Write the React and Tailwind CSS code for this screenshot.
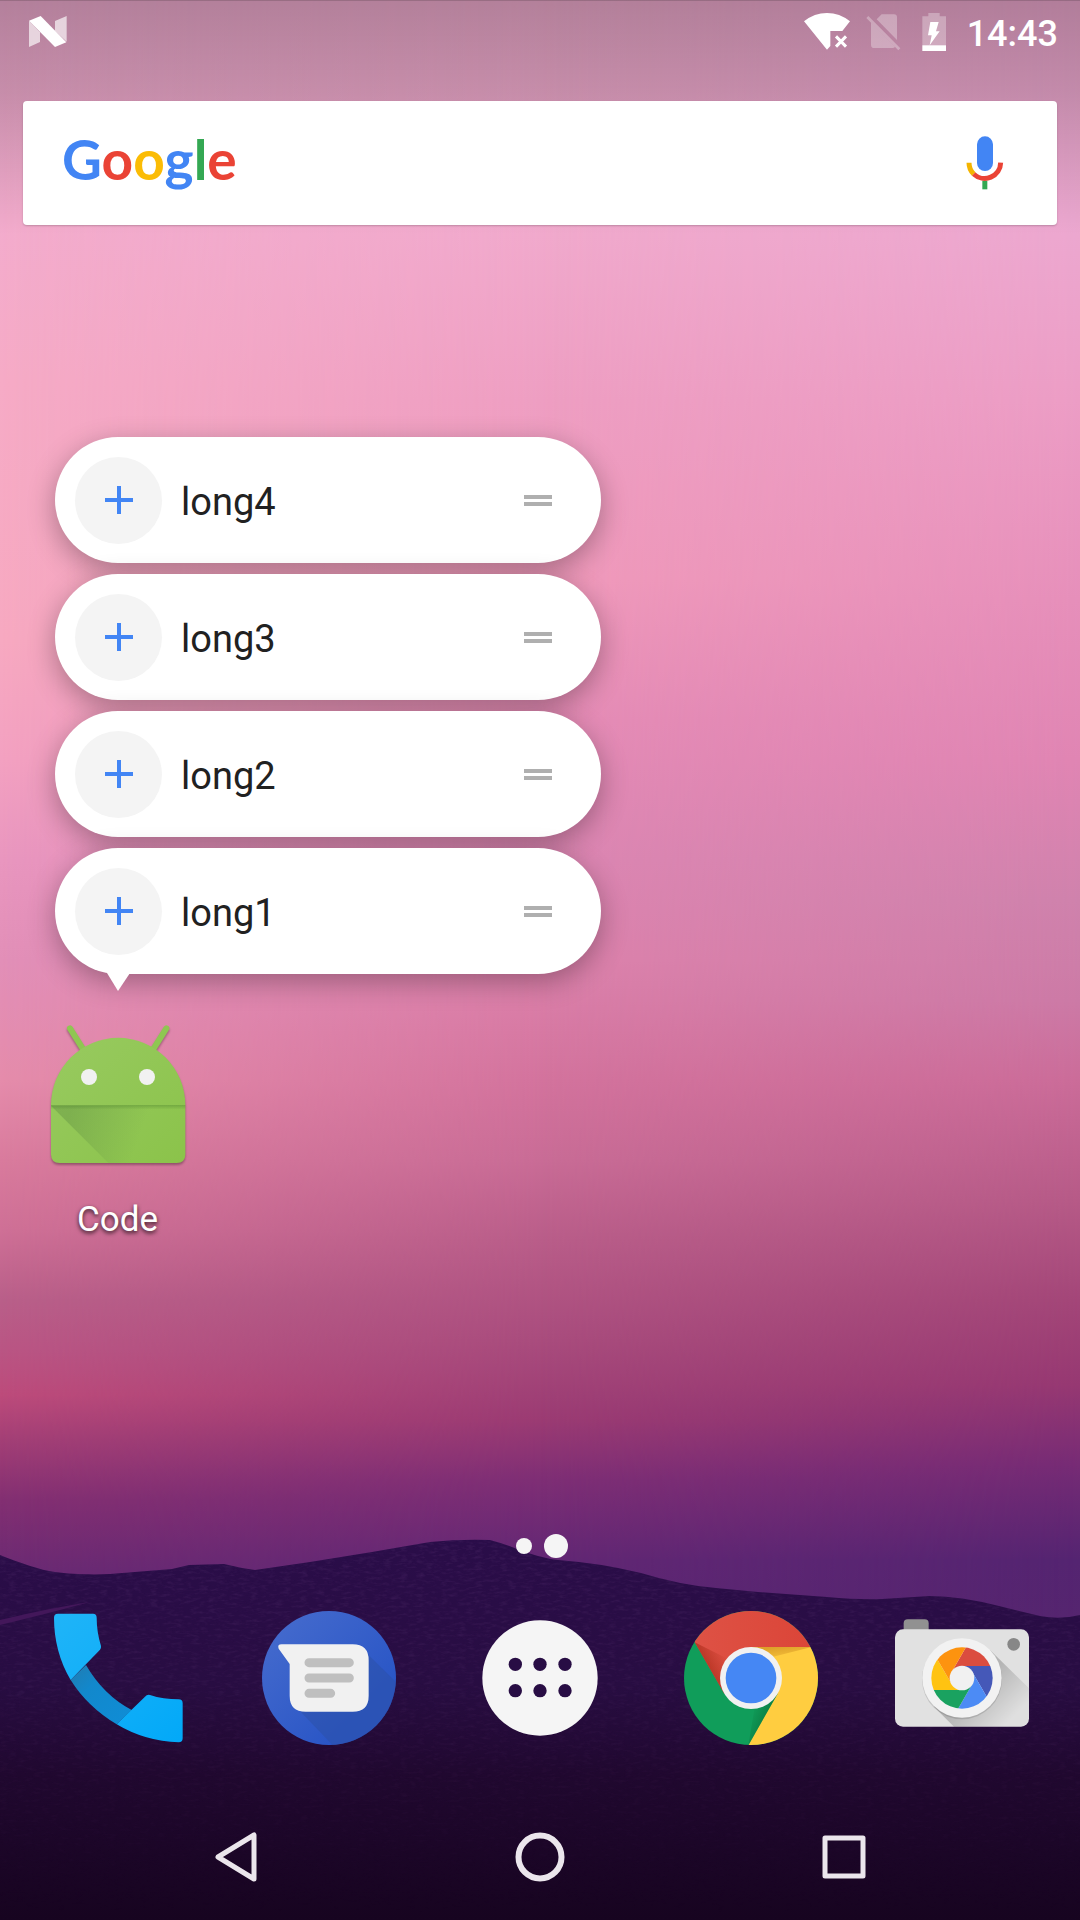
const SHORTCUTS = ["long4", "long3", "long2", "long1"];

/* Column colours of the dusk sky, top to bottom: [y, colour] */
const SKY_LEFT = [
  [0, "#f2add2"], [220, "#f3accd"], [380, "#f6abc6"], [640, "#f7a9c1"], [760, "#f3a1c1"], [860, "#e996bf"],
  [960, "#e28fb8"], [1080, "#e58cab"], [1160, "#d97b9d"], [1230, "#cf7096"], [1300, "#b95f89"],
  [1350, "#ba5584"], [1395, "#bd4b7b"], [1440, "#a33f76"], [1500, "#832f72"], [1570, "#6b2a73"], [1620, "#6b2a73"],
];
const SKY_MID = [
  [0, "#f2add0"], [220, "#f1aacd"], [400, "#ee9ec2"], [580, "#f09abb"], [720, "#e58cb6"], [860, "#dc86b2"],
  [960, "#dd82ac"], [1080, "#d3739d"], [1160, "#c96c96"], [1240, "#b95d89"], [1340, "#a94c7d"],
  [1420, "#9b3b73"], [1480, "#7e2e75"], [1560, "#622774"], [1620, "#5a2672"],
];
const SKY_RIGHT = [
  [0, "#efa9d0"], [220, "#eca8d0"], [400, "#ec9dc5"], [600, "#e68fba"], [760, "#e085b3"], [900, "#cf82ac"],
  [1000, "#cc7aa6"], [1080, "#cb6c99"], [1200, "#b65a87"], [1300, "#a34678"], [1385, "#963872"],
  [1465, "#762b75"], [1560, "#542471"], [1620, "#55256f"],
];

function Stops({ list }) {
  return list.map(([y, c]) => <stop key={y} offset={y / 1620} stopColor={c} />);
}

function Wallpaper() {
  const ridge =
    "M0 1555 C20 1563 40 1570 55 1572 S90 1575 110 1574 L172 1569 L189 1565 L224 1564 Q240 1568 255 1570 L310 1562 L372 1552 L430 1542 Q460 1539 490 1540 Q505 1544 517 1549 Q540 1558 558 1560 Q600 1563 641 1573 Q680 1585 716 1588 L758 1592 L827 1597 Q860 1600 882 1599 L930 1596 Q960 1596 999 1606 L1040 1616 Q1060 1620 1080 1615 V1920 H0Z";
  return (
    <svg className="absolute inset-0 -z-10 size-full" viewBox="0 0 1080 1920" preserveAspectRatio="none" aria-hidden="true">
      <defs>
        <linearGradient id="skyL" x1="0" y1="0" x2="0" y2="1"><Stops list={SKY_LEFT} /></linearGradient>
        <linearGradient id="skyM" x1="0" y1="0" x2="0" y2="1"><Stops list={SKY_MID} /></linearGradient>
        <linearGradient id="skyR" x1="0" y1="0" x2="0" y2="1"><Stops list={SKY_RIGHT} /></linearGradient>
        <linearGradient id="fadeM">
          <stop offset="0" stopColor="#fff" stopOpacity="0" /><stop offset=".5" stopColor="#fff" />
        </linearGradient>
        <linearGradient id="fadeR">
          <stop offset=".5" stopColor="#fff" stopOpacity="0" /><stop offset="1" stopColor="#fff" />
        </linearGradient>
        <mask id="maskM"><rect width="1080" height="1620" fill="url(#fadeM)" /></mask>
        <mask id="maskR"><rect width="1080" height="1620" fill="url(#fadeR)" /></mask>
        <linearGradient id="hill" x1="0" y1="0" x2="0" y2="1">
          <stop offset="0" stopColor="#2a0d49" /><stop offset=".38" stopColor="#280d42" />
          <stop offset=".62" stopColor="#20082f" /><stop offset="1" stopColor="#170420" />
        </linearGradient>
        <linearGradient id="scrim" x1="0" y1="0" x2="0" y2="1">
          <stop offset="0" stopColor="#000" stopOpacity=".26" />
          <stop offset=".4" stopColor="#000" stopOpacity=".18" />
          <stop offset="1" stopColor="#000" stopOpacity="0" />
        </linearGradient>
        <linearGradient id="grainFade" x1="0" y1="0" x2="0" y2="1">
          <stop offset="0" stopColor="#fff" /><stop offset="1" stopColor="#000" />
        </linearGradient>
        <mask id="grainMask"><path d={ridge} fill="url(#grainFade)" /></mask>
        <filter id="grain" x="0" y="0" width="100%" height="100%">
          <feTurbulence type="fractalNoise" baseFrequency=".12 .35" numOctaves="3" seed="4" />
          <feColorMatrix values="0 0 0 0 .42  0 0 0 0 .16  0 0 0 0 .5  1.6 0 0 0 -.7" />
        </filter>
      </defs>
      <rect width="1080" height="1620" fill="url(#skyL)" />
      <rect width="1080" height="1620" fill="url(#skyM)" mask="url(#maskM)" />
      <rect width="1080" height="1620" fill="url(#skyR)" mask="url(#maskR)" />
      <rect width="1080" height="235" fill="url(#scrim)" />
      <rect width="1080" height="1" fill="#000" opacity=".15" />
      <path d={ridge} fill="url(#hill)" />
      <g mask="url(#grainMask)"><rect y="1535" width="1080" height="385" filter="url(#grain)" opacity=".16" /></g>
      <path d="M0 1620 Q50 1608 90 1602 Q50 1613 0 1625Z" fill="#43175a" />
    </svg>
  );
}

function StatusBar() {
  return (
    <header className="flex h-[63px] items-center gap-4 pr-[22px] pl-7">
      <svg className="h-[33px] w-10" viewBox="84 45 120 99" fill="#fff" role="img" aria-label="Android N">
        <path d="M87 62 L120 97 V126 L87 141Z M165 63 L200 48 V125 L165 93Z" opacity=".65" />
        <path d="M87 62 L122 48 L199 127 L165 141Z" />
      </svg>
      <svg className="ml-auto h-[37px] w-[46px]" viewBox="186 39 138 111" fill="#fff" role="img" aria-label="Wi-Fi, no internet">
        <path d="M186 64 Q217 39 255 39 T324 64 L301 93 H265 V138 L255 149Z" />
        <path d="M282 109 L312 140 M312 109 L282 140" stroke="#fff" strokeWidth="9" />
      </svg>
      <svg className="h-[38px] w-10" viewBox="372 39 120 114" fill="#fff" opacity=".3" role="img" aria-label="No SIM">
        <path d="M404 58 L419 43 H456 Q465 43 465 52 V120Z M387 68 L459 141 Q456 144 452 144 H397 Q387 144 387 134Z M379 48 L475 145 L469 151 L373 54Z" />
      </svg>
      <svg className="h-[38px] w-[29px]" viewBox="546 36 87 114" fill="#fff" role="img" aria-label="Battery charging">
        <path d="M547 46 H565 V36 H599 V46 H618 V133 H547Z" opacity=".3" />
        <path d="M547 133 H618 V150 H547Z M571 63 H596 L588 91 H599 L569 133 L575 103 H564Z" />
      </svg>
      <time className="pt-1 text-[36px] leading-10 font-medium text-white">14:43</time>
    </header>
  );
}

function SearchBar() {
  return (
    <div className="mx-[23px] mt-[38px] flex h-[124px] items-center justify-between rounded bg-white pr-[53px] pl-[39px] shadow-[0_1px_2px_rgba(0,0,0,0.2)]">
      <button type="button" aria-label="Google" className="pb-2 font-[Lato,'Liberation_Sans',sans-serif] text-[55px] leading-[68px] font-bold">
        <span className="text-[#4285f4]">G</span>
        <span className="text-[#ea4335]">o</span>
        <span className="text-[#fbbc05]">o</span>
        <span className="text-[#4285f4]">g</span>
        <span className="text-[#34a853]">l</span>
        <span className="text-[#ea4335]">e</span>
      </button>
      <button type="button" aria-label="Voice search">
        <svg className="h-[54px] w-[38px]" viewBox="677 410 114 162" fill="none">
          <rect x="710" y="411" width="48" height="104" rx="24" fill="#4285f4" />
          <path d="M726 544 H741 V570 H726Z" fill="#34a853" />
          <path d="M686 490 A48 48 0 0 0 700 524" stroke="#f4b400" strokeWidth="15" />
          <path d="M700 524 A48 48 0 0 0 781 490" stroke="#ea4335" strokeWidth="15" />
        </svg>
      </button>
    </div>
  );
}

function Shortcut({ label, last }) {
  return (
    <li className="relative">
      <button type="button" className="flex h-[126px] w-full items-center rounded-full bg-white pr-[49px] pl-5 text-left shadow-[0_8px_28px_rgba(0,0,0,0.3)]">
        <span className="grid size-[87px] place-items-center rounded-full bg-[#f4f4f4]">
          <svg className="size-7" viewBox="0 0 28 28" stroke="#4285f4" strokeWidth="4" aria-hidden="true">
            <path d="M14 0V28M0 14H28" />
          </svg>
        </span>
        <span className="ml-[19px] flex-1 pt-1 text-[38px] leading-[44px] text-[#212121]">{label}</span>
        <svg className="h-3 w-7" viewBox="0 0 28 12" fill="#afafaf" aria-hidden="true">
          <path d="M0 1H28V5H0Z M0 8H28V12H0Z" />
        </svg>
      </button>
      {last && (
        <svg className="absolute top-full left-[51px] -mt-1 h-[21px] w-6" viewBox="0 0 24 21" fill="#fff" aria-hidden="true">
          <path d="M1 3 H24 L12 21Z" />
        </svg>
      )}
    </li>
  );
}

function AndroidIcon() {
  return (
    <svg className="h-36 w-[134px] overflow-visible drop-shadow-[0_2px_1px_rgba(0,0,0,0.3)]" viewBox="63 552 402 432" aria-hidden="true">
      <defs>
        <linearGradient id="droid" x1="0" y1="0" x2="1" y2="1">
          <stop offset="0" stopColor="#98ca60" /><stop offset="1" stopColor="#8bc34a" />
        </linearGradient>
        <linearGradient id="fold" gradientUnits="userSpaceOnUse" x1="120" y1="820" x2="330" y2="890">
          <stop offset="0" stopColor="#4d7a3a" stopOpacity=".3" /><stop offset="1" stopColor="#4d7a3a" stopOpacity="0" />
        </linearGradient>
        <linearGradient id="crease" x1="0" y1="0" x2="0" y2="1">
          <stop offset="0" stopColor="#33691e" stopOpacity=".3" /><stop offset="1" stopColor="#33691e" stopOpacity="0" />
        </linearGradient>
      </defs>
      <path d="M120 565 L162 632 M409 565 L367 632" stroke="#8fc652" strokeWidth="18" strokeLinecap="round" />
      <path d="M63 795 A201.5 201.5 0 0 1 466 795 V943 Q466 969 440 969 H89 Q63 969 63 943Z" fill="url(#droid)" />
      <path d="M63 797 H466 V969 H235Z" fill="url(#fold)" />
      <path d="M63 795 H466 V809 H63Z" fill="url(#crease)" />
      <circle cx="177" cy="711" r="24" fill="#f1f1f1" />
      <circle cx="351" cy="711" r="24" fill="#f1f1f1" />
    </svg>
  );
}

function PhoneIcon() {
  return (
    <svg className="size-[134px]" viewBox="153 273 402 402" aria-hidden="true">
      <defs>
        <linearGradient id="phone" gradientUnits="userSpaceOnUse" x1="170" y1="290" x2="540" y2="660">
          <stop offset="0" stopColor="#1fb4f8" /><stop offset="1" stopColor="#03a9f8" />
        </linearGradient>
        <linearGradient id="grip" gradientUnits="userSpaceOnUse" x1="235" y1="455" x2="370" y2="590">
          <stop offset="0" stopColor="#1c80ba" /><stop offset=".3" stopColor="#1288cc" /><stop offset="1" stopColor="#108cd4" />
        </linearGradient>
      </defs>
      <path d="M258 435 Q310 525 395 570 L350 613 Q262 560 212 480Z" fill="url(#grip)" />
      <path d="M162 293 Q162 281 174 281 H279 Q290 281 290 293 Q290 335 303 378 Q304 384 300 389 L212 480 Q162 395 162 293Z" fill="url(#phone)" />
      <path d="M350 613 L435 530 Q441 523 450 525 Q490 538 536 538 Q548 538 548 550 V655 Q548 667 536 667 Q435 664 350 613Z" fill="url(#phone)" />
    </svg>
  );
}

function MessagesIcon() {
  return (
    <svg className="size-[134px]" viewBox="786 273 402 402" aria-hidden="true">
      <defs>
        <linearGradient id="msg" x1="0" y1="0" x2="1" y2="1">
          <stop offset=".1" stopColor="#446acd" /><stop offset=".75" stopColor="#2a56c6" />
        </linearGradient>
        <clipPath id="msgClip"><circle cx="987" cy="474" r="201" /></clipPath>
      </defs>
      <circle cx="987" cy="474" r="201" fill="url(#msg)" />
      <path d="M1100 400 L1200 498 V690 H1012 L897 570Z" fill="#2b50a5" opacity=".5" clipPath="url(#msgClip)" />
      <path d="M836 386 Q831 373 845 373 H1058 Q1106 373 1106 421 V527 Q1106 575 1058 575 H917 Q869 575 869 527 V432Z" fill="#f1f1f1" />
      <path d="M927 428 H1048 M927 474 H1048 M927 520 H992" stroke="#bfbfbf" strokeWidth="27" strokeLinecap="round" />
    </svg>
  );
}

function AppsIcon() {
  return (
    <svg className="size-[134px]" viewBox="159 333 402 402" aria-hidden="true">
      <circle cx="360" cy="534" r="173" fill="#f5f5f5" />
      <g fill="#280d44">
        <circle cx="286" cy="493" r="20" /><circle cx="360" cy="493" r="20" /><circle cx="435" cy="493" r="20" />
        <circle cx="286" cy="572" r="20" /><circle cx="360" cy="572" r="20" /><circle cx="435" cy="572" r="20" />
      </g>
    </svg>
  );
}

function ChromeIcon() {
  return (
    <svg className="size-[134px]" viewBox="792 333 402 402" aria-hidden="true">
      <defs>
        <clipPath id="chromeClip"><circle cx="993" cy="534" r="201" /></clipPath>
        <linearGradient id="chromeRed" x1="0" y1="0" x2="1" y2="0">
          <stop offset=".1" stopColor="#de5245" /><stop offset="1" stopColor="#db4437" />
        </linearGradient>
        <linearGradient id="chromeShadeR" gradientUnits="userSpaceOnUse" x1="862" y1="500" x2="920" y2="470">
          <stop offset="0" stopColor="#a52714" stopOpacity=".6" /><stop offset="1" stopColor="#a52714" stopOpacity="0" />
        </linearGradient>
        <linearGradient id="chromeShadeY" gradientUnits="userSpaceOnUse" x1="1070" y1="441" x2="1075" y2="480">
          <stop offset="0" stopColor="#c8841b" stopOpacity=".6" /><stop offset="1" stopColor="#c8841b" stopOpacity=".15" />
        </linearGradient>
        <linearGradient id="chromeShadeG" gradientUnits="userSpaceOnUse" x1="1040" y1="660" x2="990" y2="640">
          <stop offset="0" stopColor="#055524" stopOpacity=".4" /><stop offset="1" stopColor="#055524" stopOpacity="0" />
        </linearGradient>
      </defs>
      <g clipPath="url(#chromeClip)">
        <path d="M780 320 H1200 V740 H780Z" fill="#109d5a" />
        <path d="M993 441 H1200 V740 H983 L1073 581 L993 534Z" fill="#ffcd40" />
        <path d="M778 347 L913 581 L993 534 V441 H1200 V320 H778Z" fill="url(#chromeRed)" />
        <path d="M824 427 L913 581 L930 480Z" fill="url(#chromeShadeR)" />
        <path d="M993 441 H1175 L1060 470Z" fill="url(#chromeShadeY)" />
        <path d="M1073 581 L985 736 L1005 615Z" fill="url(#chromeShadeG)" />
      </g>
      <circle cx="993" cy="534" r="93" fill="#f1f1f1" />
      <circle cx="993" cy="534" r="76" fill="#4587f4" />
    </svg>
  );
}

function CameraIcon() {
  return (
    <svg className="size-[134px]" viewBox="165 153 402 402" aria-hidden="true">
      <defs>
        <clipPath id="lens"><circle cx="366" cy="354" r="92" /></clipPath>
        <linearGradient id="camShade" gradientUnits="userSpaceOnUse" x1="400" y1="390" x2="500" y2="490">
          <stop offset="0" stopColor="#000" stopOpacity=".2" /><stop offset="1" stopColor="#000" stopOpacity=".01" />
        </linearGradient>
      </defs>
      <rect x="191" y="178" width="75" height="50" rx="12" fill="#919191" />
      <rect x="165" y="208" width="402" height="292" rx="24" fill="#e1e1e1" />
      <path d="M450 270 L567 385 V476 Q567 500 543 500 H342 L282 440Z" fill="url(#camShade)" />
      <circle cx="366" cy="358" r="120" fill="#000" opacity=".12" />
      <circle cx="366" cy="354" r="119" fill="#f2f2f2" />
      <g clipPath="url(#lens)">
        <path d="M335 336 L411 204 H520 V318 H366Z" fill="#db4d3f" />
        <path d="M366 318 H520 V468 H474 L397 336Z" fill="#4558b8" />
        <path d="M397 336 L474 468 V504 H321 L397 372Z" fill="#4c8bf5" />
        <path d="M397 372 L321 504 H220 V390 H366Z" fill="#1aa260" />
        <path d="M366 390 H220 V240 H258 L335 372Z" fill="#ffc311" />
        <path d="M335 372 L258 240 V204 H411 L335 336Z" fill="#fd930f" />
      </g>
      <circle cx="366" cy="354" r="37" fill="#f1f1f1" />
      <circle cx="521" cy="253" r="19" fill="#878787" />
    </svg>
  );
}

const DOCK = [
  ["Phone", PhoneIcon],
  ["Messenger", MessagesIcon],
  ["Apps", AppsIcon],
  ["Chrome", ChromeIcon],
  ["Camera", CameraIcon],
];

function NavBar() {
  return (
    <nav className="grid h-[126px] grid-cols-3 place-items-center px-21">
      <button type="button" aria-label="Back">
        <svg className="size-[50px]" viewBox="0 0 50 50" fill="none" stroke="#ebe6ec" strokeWidth="5" strokeLinejoin="round" aria-hidden="true">
          <path d="M43 3 V47 L7 25Z" />
        </svg>
      </button>
      <button type="button" aria-label="Home">
        <svg className="size-[50px]" viewBox="0 0 50 50" fill="none" stroke="#ebe6ec" strokeWidth="6" aria-hidden="true">
          <circle cx="25" cy="25" r="21.5" />
        </svg>
      </button>
      <button type="button" aria-label="Recent apps">
        <svg className="size-[50px]" viewBox="0 0 50 50" fill="none" stroke="#ebe6ec" strokeWidth="5" strokeLinejoin="round" aria-hidden="true">
          <path d="M6 6H44V44H6Z" />
        </svg>
      </button>
    </nav>
  );
}

export default function App() {
  return (
    <div className="relative isolate flex min-h-screen flex-col font-[Roboto,'Liberation_Sans',sans-serif]">
      <Wallpaper />
      <StatusBar />
      <SearchBar />
      <main className="flex flex-1 flex-col">
        <ul className="mt-[212px] ml-[55px] flex w-[546px] max-w-full flex-col gap-[11px]">
          {SHORTCUTS.map((label, i) => (
            <Shortcut key={label} label={label} last={i === SHORTCUTS.length - 1} />
          ))}
        </ul>
        <div className="mt-[50px] grid grid-cols-5 px-3">
          <button type="button" className="flex flex-col items-center gap-8">
            <AndroidIcon />
            <span className="text-[35px] leading-10 text-white [text-shadow:0_2px_4px_rgba(0,0,0,0.8)]">Code</span>
          </button>
        </div>
        <div className="mt-auto flex items-center justify-center gap-3 pl-1" role="img" aria-label="Page 2 of 2">
          <span className="size-4 rounded-full bg-[#f5f5f5]" />
          <span className="size-6 rounded-full bg-[#f5f5f5]" />
        </div>
        <div className="mt-[53px] mb-[49px] grid grid-cols-5 place-items-center px-3">
          {DOCK.map(([name, Icon]) => (
            <button key={name} type="button" aria-label={name}>
              <Icon />
            </button>
          ))}
        </div>
      </main>
      <NavBar />
    </div>
  );
}
